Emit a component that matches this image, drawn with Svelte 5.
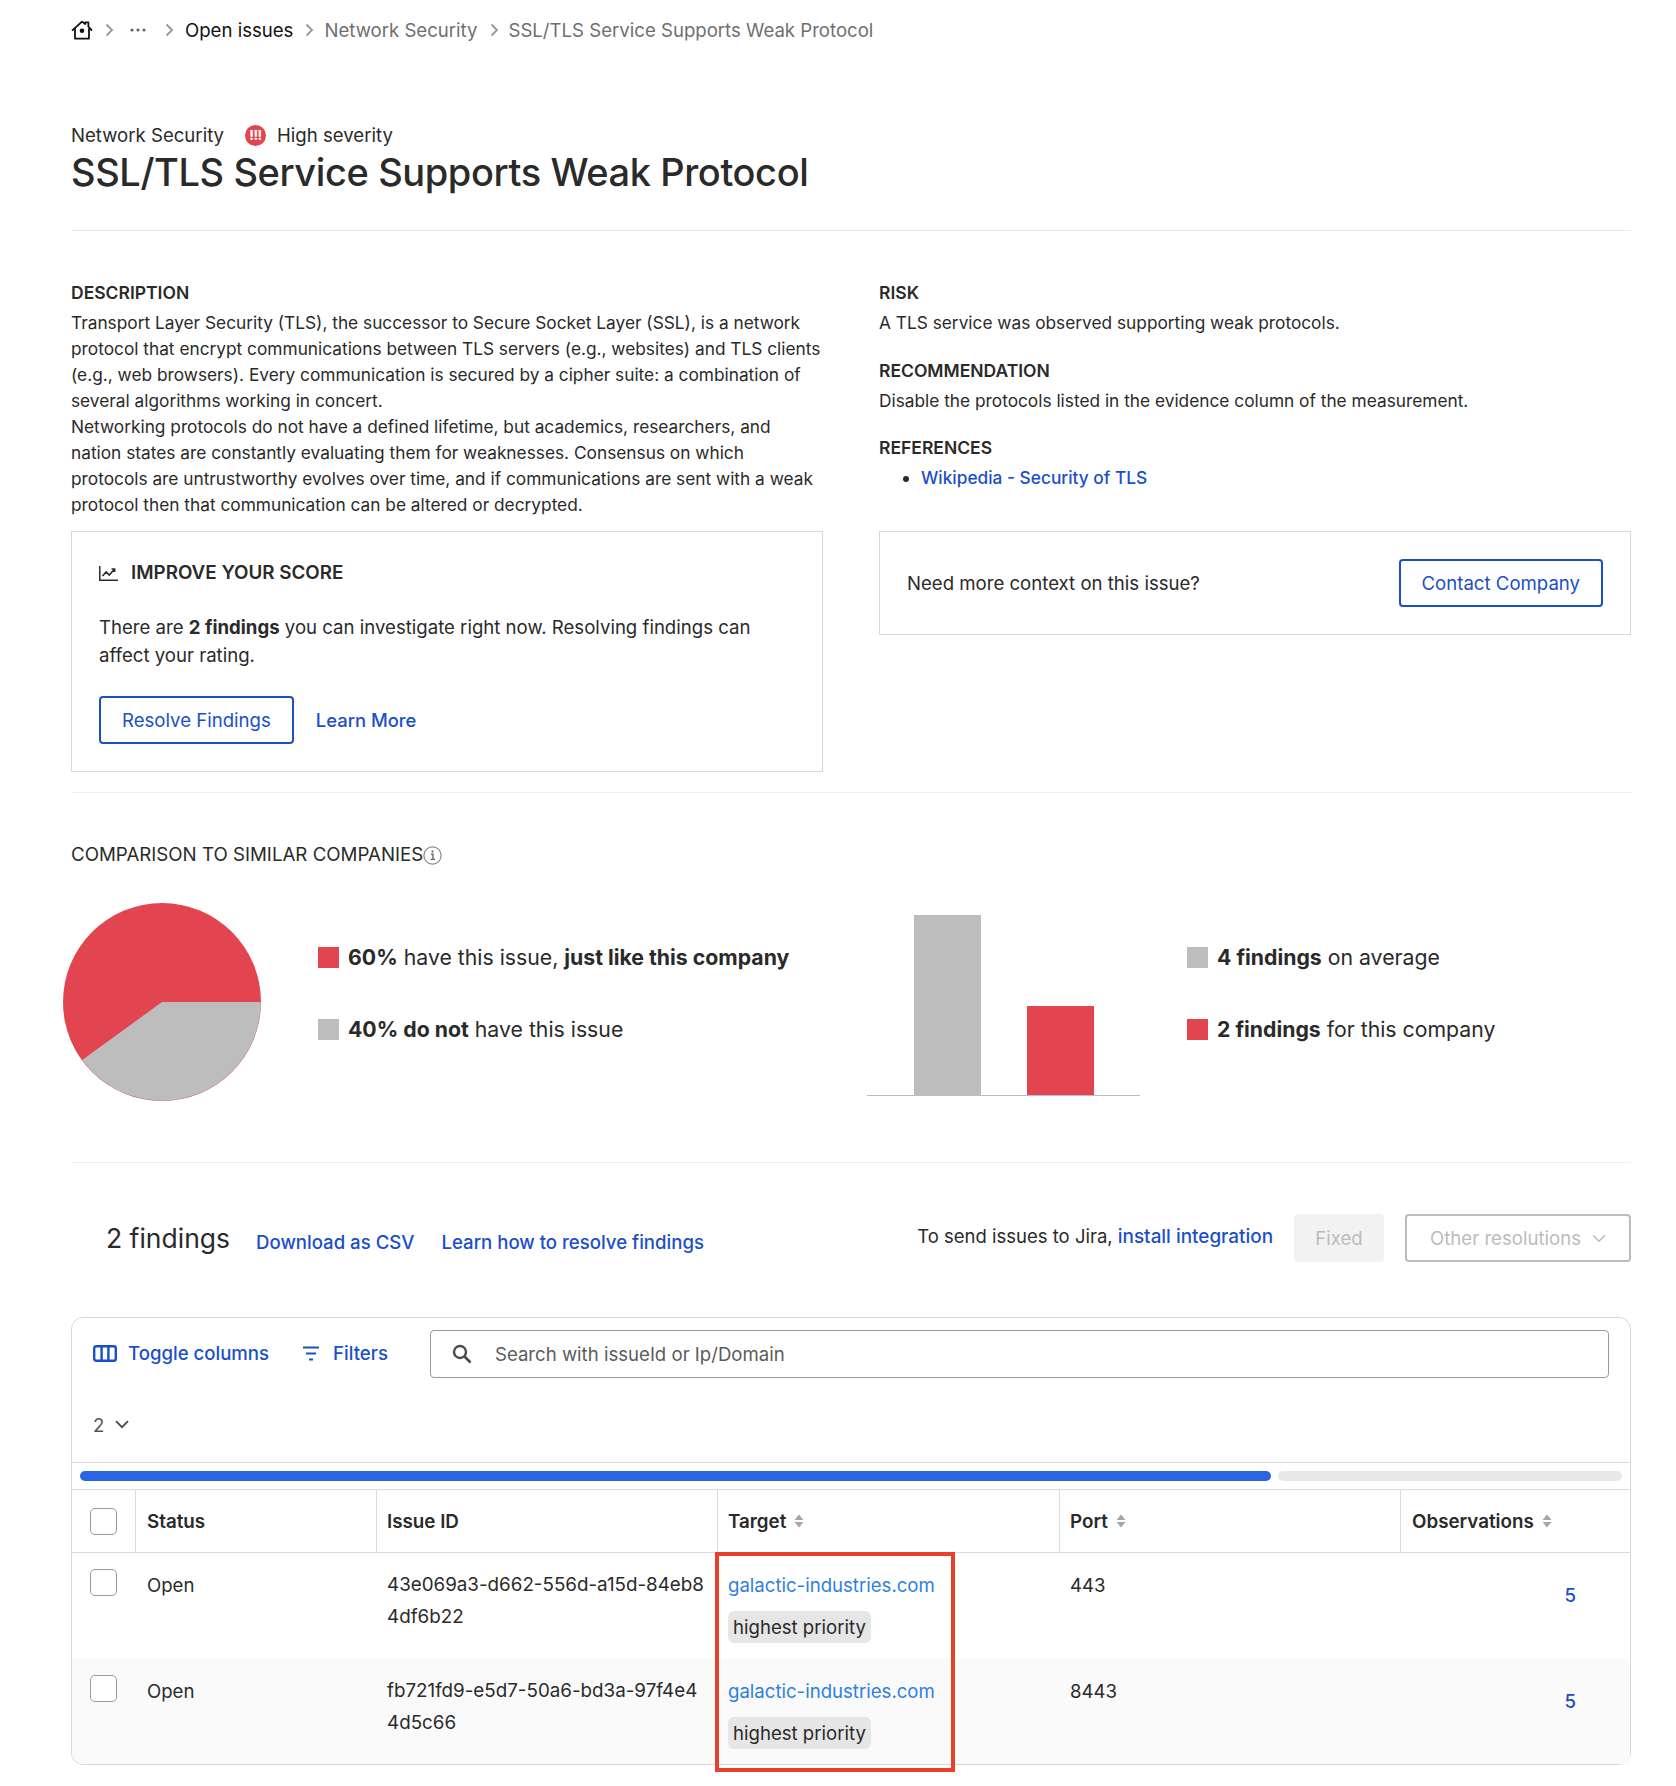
<script>
  const rows = [
    { id: ['43e069a3-d662-556d-a15d-84eb8', '4df6b22'], port: '443' },
    { id: ['fb721fd9-e5d7-50a6-bd3a-97f4e4', '4d5c66'], port: '8443' }
  ];
  const crumbs = ['Network Security', 'SSL/TLS Service Supports Weak Protocol'];
</script>

{#snippet chevron()}
  <svg class="chev" width="9" height="14" viewBox="0 0 9 14"><path d="M1.5 1.5 7 7l-5.5 5.5" fill="none" stroke="#9a9a9a" stroke-width="1.9"/></svg>
{/snippet}

{#snippet sorter()}
  <svg class="sort" width="10" height="14" viewBox="0 0 10 14"><path d="M5 0.5 9.5 6H0.5ZM5 13.5 0.5 8H9.5Z" fill="#a6a6a6"/></svg>
{/snippet}

<div class="page">
  <nav class="crumbs">
    <svg width="22" height="20" viewBox="0 0 22 20" class="home"><path d="M1 10.6 11 1.6l3.2 2.4V2.4h3.2v4.2L21 10.6M4 8.6V18.6h14V8.6" fill="none" stroke="#111" stroke-width="1.8" stroke-linejoin="round"/><circle cx="11" cy="10.8" r="2.3" fill="#111"/></svg>
    {@render chevron()}
    <svg class="dots" width="16" height="4" viewBox="0 0 16 4"><circle cx="2" cy="2" r="1.6" fill="#666"/><circle cx="8" cy="2" r="1.6" fill="#666"/><circle cx="14" cy="2" r="1.6" fill="#666"/></svg>
    {@render chevron()}
    <span class="crumb-on">Open issues</span>
    {#each crumbs as c}
      {@render chevron()}
      <span class="crumb">{c}</span>
    {/each}
  </nav>

  <header class="head">
    <div class="meta">
      <span>Network Security</span>
      <span class="sev"><span class="sev-dot">!!!</span>High severity</span>
    </div>
    <h1>SSL/TLS Service Supports Weak Protocol</h1>
  </header>

  <section class="info">
    <div class="col">
      <h3>DESCRIPTION</h3>
      <p class="desc">Transport Layer Security (TLS), the successor to Secure Socket Layer (SSL), is a network protocol that encrypt communications between TLS servers (e.g., websites) and TLS clients (e.g., web browsers). Every communication is secured by a cipher suite: a combination of several algorithms working in concert.</p>
      <p class="desc">Networking protocols do not have a defined lifetime, but academics, researchers, and nation states are constantly evaluating them for weaknesses. Consensus on which protocols are untrustworthy evolves over time, and if communications are sent with a weak protocol then that communication can be altered or decrypted.</p>
      <div class="card score">
        <div class="score-title">
          <svg width="19" height="15" viewBox="0 0 19 15"><path d="M.8 0v14.2H19" fill="none" stroke="#2a2a2a" stroke-width="1.5"/><path d="M3.5 10 7.2 6l3 3 5-5.5M12.6 3h3v3" fill="none" stroke="#2a2a2a" stroke-width="1.6"/></svg>
          IMPROVE YOUR SCORE
        </div>
        <p class="score-text">There are <b>2 findings</b> you can investigate right now. Resolving findings can affect your rating.</p>
        <div class="score-actions">
          <span class="btn">Resolve Findings</span>
          <span class="link learn">Learn More</span>
        </div>
      </div>
    </div>
    <div class="col">
      <h3>RISK</h3>
      <p class="desc gap first">A TLS service was observed supporting weak protocols.</p>
      <h3>RECOMMENDATION</h3>
      <p class="desc gap">Disable the protocols listed in the evidence column of the measurement.</p>
      <h3>REFERENCES</h3>
      <ul><li><span class="link strong">Wikipedia - Security of TLS</span></li></ul>
      <div class="card contact">
        <span>Need more context on this issue?</span>
        <span class="btn">Contact Company</span>
      </div>
    </div>
  </section>

  <section class="compare">
    <h2>COMPARISON TO SIMILAR COMPANIES<svg width="19" height="19" viewBox="0 0 19 19"><circle cx="9.5" cy="9.5" r="8.6" fill="none" stroke="#8a8a8a" stroke-width="1.2"/><path d="M8 8.2h2v5M7.6 13.4h4.4" fill="none" stroke="#666" stroke-width="1.4"/><circle cx="9.5" cy="5.6" r="1.1" fill="#666"/></svg></h2>
    <div class="charts">
      <svg class="pie" width="198" height="198" viewBox="0 0 198 198">
        <circle cx="99" cy="99" r="99" fill="#e2454f"/>
        <path d="M99 99H197.8A98.8 98.8 0 0 1 19.2 157.1Z" fill="#bdbdbd"/>
      </svg>
      <div class="legend pie-legend">
        <div class="lg"><i class="red"></i><span><b>60%</b> have this issue, <b>just like this company</b></span></div>
        <div class="lg"><i class="gray"></i><span><b>40% do not</b> have this issue</span></div>
      </div>
      <div class="bars">
        <div class="bar gray" style="height:180px"></div>
        <div class="bar red" style="height:89px"></div>
      </div>
      <div class="legend bar-legend">
        <div class="lg"><i class="gray"></i><span><b>4 findings</b> on average</span></div>
        <div class="lg"><i class="red"></i><span><b>2 findings</b> for this company</span></div>
      </div>
    </div>
  </section>

  <section class="findings-bar">
    <span class="count">2 findings</span>
    <span class="link strong low">Download as CSV</span>
    <span class="link strong low">Learn how to resolve findings</span>
    <span class="jira">To send issues to Jira, <span class="link strong inst">install integration</span></span>
    <span class="fixed">Fixed</span>
    <span class="other">Other resolutions
      <svg width="14" height="9" viewBox="0 0 14 9"><path d="M1 1.2 7 7.2l6-6" fill="none" stroke="#bcbcbc" stroke-width="1.6"/></svg>
    </span>
  </section>

  <section class="tablecard">
    <div class="tools">
      <span class="tool">
        <svg width="24" height="17" viewBox="0 0 24 17"><rect x="1.2" y="1.2" width="21.6" height="14.6" rx="2" fill="none" stroke="#1a4fc9" stroke-width="2.4"/><path d="M8.6 1v15M15.4 1v15" stroke="#1a4fc9" stroke-width="2.4"/></svg>
        Toggle columns
      </span>
      <span class="tool filters">
        <svg width="20" height="15" viewBox="0 0 20 15"><path d="M2 1.5h16M5 7.5h10M8 13.5h4" stroke="#1a4fc9" stroke-width="2"/></svg>
        Filters
      </span>
      <div class="search">
        <svg width="20" height="20" viewBox="0 0 20 20"><circle cx="8" cy="8" r="6" fill="none" stroke="#4a4a4a" stroke-width="2.4"/><path d="m12.5 12.5 6 6" stroke="#4a4a4a" stroke-width="2.6"/></svg>
        <span>Search with issueId or Ip/Domain</span>
      </div>
    </div>
    <div class="pager">2
      <svg width="14" height="9" viewBox="0 0 14 9"><path d="M1 1.2 7 7.2l6-6" fill="none" stroke="#4a4a4a" stroke-width="1.8"/></svg>
    </div>
    <div class="progress"><div class="done"></div><div class="rest"></div></div>
    <div class="table">
      <div class="row th">
        <div class="c c0"><span class="cb"></span></div>
        <div class="c c1">Status</div>
        <div class="c c2">Issue ID</div>
        <div class="c c3">Target {@render sorter()}</div>
        <div class="c c4">Port {@render sorter()}</div>
        <div class="c c5">Observations {@render sorter()}</div>
      </div>
      {#each rows as r, i}
        <div class="row td" class:alt={i === 1}>
          <div class="c c0"><span class="cb"></span></div>
          <div class="c c1">Open</div>
          <div class="c c2 mono">{r.id[0]}<br />{r.id[1]}</div>
          <div class="c c3">
            <span class="domain">galactic-industries.com</span>
            <span class="tag">highest priority</span>
          </div>
          <div class="c c4">{r.port}</div>
          <div class="c c5 obs"><span class="link strong">5</span></div>
        </div>
      {/each}
      <div class="marker"></div>
    </div>
  </section>
</div>

<style>
  :global(body) { margin: 0; background: #fff; }
  .page {
    width: 1560px; margin-left: 71px; height: 1786px;
    font-family: Inter, "Liberation Sans", sans-serif; color: #2a2a2a;
    font-size: 17.3px;
  }
  .crumbs { display: flex; align-items: center; height: 60px; font-size: 18.6px; }
  .home { margin-right: 12px; }
  .chev { flex: none; }
  .dots { margin: 0 19px 0 16px; }
  .crumbs .chev + .crumb { margin-left: 10px; }
  .crumbs .chev + .crumb-on { margin-left: 11px; }
  .crumb { color: #6f6f6f; margin-right: 12px; }
  .crumb-on { color: #111; margin-right: 12px; }

  .head { padding-top: 62px; padding-bottom: 34px; border-bottom: 1px solid #e8e8e8; }
  .meta { display: flex; align-items: center; gap: 21px; font-size: 18.6px; line-height: 26px; }
  .sev { display: flex; align-items: center; gap: 11px; }
  .sev-dot { width: 21px; height: 21px; border-radius: 50%; background: #e2454f; color: #fff; font-size: 13px; font-weight: 800; display: flex; align-items: center; justify-content: center; letter-spacing: -0.5px; }
  h1 { margin: 0; font-size: 38px; letter-spacing: -0.4px; line-height: 48px; font-weight: 500; }

  .info { display: grid; grid-template-columns: 752px 752px; gap: 56px; padding-top: 49px; padding-bottom: 20px; border-bottom: 1px solid #eee; }
  h3 { margin: 0; font-size: 17.5px; line-height: 26px; font-weight: 600; }
  .desc { margin: 4px 0 0; line-height: 26px; }
  .desc + .desc { margin-top: 0; }
  .desc.gap { margin-bottom: 21px; }
  .desc.first { margin-bottom: 22px; }
  ul { margin: 4px 0 0; padding-left: 42px; line-height: 26px; height: 52px; }
  .card { border: 1px solid #d9d9d9; box-sizing: border-box; }
  .score { margin-top: 13px; height: 241px; padding: 27px; font-size: 18.6px; }
  .score-title { display: flex; align-items: center; gap: 13px; font-size: 18.8px; font-weight: 600; line-height: 28px; }
  .score-text { margin: 27px 0 27px; line-height: 27.5px; }
  .score-actions { display: flex; align-items: center; gap: 22px; }
  .btn { display: inline-flex; align-items: center; justify-content: center; height: 48px; box-sizing: border-box; border: 2px solid #1a4fc9; border-radius: 4px; color: #1a4fc9; padding: 0 21px; font-size: 18.6px; }
  .link { color: #1a4fc9; }
  .strong { font-weight: 500; }
  .learn { font-size: 18.4px; font-weight: 500; }
  .contact { margin-top: 14px; height: 104px; display: flex; align-items: center; justify-content: space-between; padding: 0 27px; font-size: 18.6px; }

  .compare { height: 370px; border-bottom: 1px solid #eee; box-sizing: border-box; padding-top: 48px; }
  h2 { margin: 0; font-size: 18.7px; line-height: 28px; font-weight: 400; display: flex; align-items: center; }
  .charts { display: flex; margin-top: 34px; margin-left: -8px; height: 198px; }
  .pie { flex: none; }
  .legend { display: flex; flex-direction: column; gap: 38px; padding-top: 37px; font-size: 21.25px; }
  .lg { display: flex; align-items: center; gap: 9px; height: 34px; }
  .lg i { width: 21px; height: 21px; flex: none; }
  .red { background: #e2454f; }
  .gray { background: #bdbdbd; }
  .lg b { font-weight: 700; }
  .pie-legend { margin-left: 57px; width: 549px; }
  .bars { width: 273px; height: 192px; margin-top: 1px; border-bottom: 1.5px solid #bdbdbd; box-sizing: border-box; display: flex; align-items: flex-end; gap: 46px; padding-left: 47px; flex: none; }
  .bar { width: 67px; }
  .bar-legend { margin-left: 47px; }

  .findings-bar { display: flex; align-items: center; height: 154px; padding-left: 35px; padding-bottom: 4px; box-sizing: border-box; font-size: 18.6px; }
  .count { font-size: 26.5px; margin-right: 26px; }
  .low { margin-top: 7px; }
  .low + .low { margin-left: 27px; }
  .jira { margin-left: auto; margin-right: 21px; margin-bottom: 3px; font-size: 18.5px; }
  .inst { font-size: 18.9px; }
  .fixed { height: 48px; width: 90px; background: #f2f2f2; border-radius: 4px; color: #bcbcbc; display: flex; align-items: center; justify-content: center; margin-right: 21px; }
  .other { height: 48px; box-sizing: border-box; width: 226px; border: 2px solid #bcbcbc; border-radius: 4px; color: #bcbcbc; display: flex; align-items: center; justify-content: center; gap: 11px; }

  .tablecard { border: 1px solid #d9d9d9; border-radius: 12px; box-sizing: border-box; height: 448px; font-size: 18.6px; }
  .tools { display: flex; align-items: center; padding: 12px 21px 0; }
  .tool { display: flex; align-items: center; gap: 11px; color: #1a4fc9; font-weight: 500; white-space: nowrap; margin-bottom: 2px; }
  .filters { margin-left: 32px; gap: 12px; }
  .search { margin-left: 42px; flex: 1; height: 48px; box-sizing: border-box; border: 1px solid #9a9a9a; border-radius: 4px; display: flex; align-items: center; gap: 23px; padding-left: 21px; color: #5c5c5c; }
  .pager { display: flex; align-items: center; gap: 11px; height: 85px; box-sizing: border-box; padding: 9px 0 0 21px; color: #555; border-bottom: 1px solid #dcdcdc; }
  .progress { display: flex; gap: 7px; padding: 8px; border-bottom: 1px solid #dcdcdc; }
  .done { width: 1191px; height: 10px; border-radius: 5px; background: #2b65e3; }
  .rest { flex: 1; height: 10px; border-radius: 5px; background: #e8e8e8; }
  .table { position: relative; }
  .row { display: grid; grid-template-columns: 64px 241px 341px 342px 341px 1fr; }
  .th { height: 63px; border-bottom: 1px solid #dcdcdc; box-sizing: border-box; font-weight: 600; font-size: 18.8px; }
  .th .c { display: flex; align-items: center; gap: 8px; padding-left: 10px; border-right: 1px solid #dcdcdc; }
  .th .c1, .th .c5 { padding-left: 11px; }
  .th .c5 { border-right: 0; }
  .th .c0 { padding-left: 18px; }
  .td { height: 106px; box-sizing: border-box; line-height: 32px; padding-top: 16px; }
  .td .c { padding-left: 10px; }
  .td .c1 { padding-left: 11px; }
  .td .c0 { padding-left: 18px; }
  .mono { font-size: 18.8px; }
  .alt { background: #fafafa; height: 105px; border-radius: 0 0 0 12px; }
  .cb { display: block; width: 27px; height: 27px; box-sizing: border-box; border: 1px solid #9a9a9a; border-radius: 5px; background: #fff; }
  .domain { display: block; color: #2f7fe0; }
  .tag { display: inline-block; background: #e6e6e6; border-radius: 6px; padding: 0 5px; margin-top: 10px; line-height: 32px; }
  .td .obs { text-align: right; padding-right: 54px; padding-top: 10px; }
  .marker { position: absolute; left: 643px; top: 62px; width: 240px; height: 220px; border: 4px solid #e8402a; box-sizing: border-box; pointer-events: none; }
</style>
